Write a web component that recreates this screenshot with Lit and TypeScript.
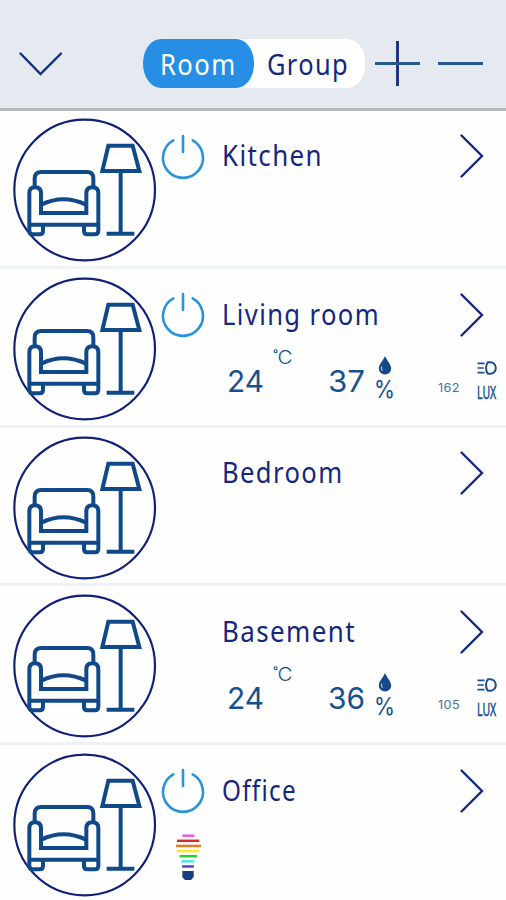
import { LitElement, html, css, svg, nothing } from "lit";
import { customElement, property } from "lit/decorators.js";

interface Room {
  name: string;
  width: number;
  power?: boolean;
  bulb?: boolean;
  climate?: { temp: string; humidity: string; lux: string };
}

const ROOMS: Room[] = [
  { name: "Kitchen", width: 101, power: true },
  { name: "Living room", width: 158, power: true, climate: { temp: "24", humidity: "37", lux: "162" } },
  { name: "Bedroom", width: 121.5 },
  { name: "Basement", width: 134, climate: { temp: "24", humidity: "36", lux: "105" } },
  { name: "Office", width: 75, power: true, bulb: true },
];

const BULB_BARS: [number, number, string][] = [
  [19, 55, "#e85be0"],
  [3, 70, "#d92b2b"],
  [0, 75, "#e57a20"],
  [3, 69, "#f5ea2c"],
  [11, 63, "#25d32b"],
  [16, 55, "#4fe6f0"],
  [18, 54, "#5546c8"],
];

/** Single-line label whose glyphs are condensed to a given width. */
const fitted = (text: string, width: number, height: number, baseline: number, cls: string) => html`
  <svg class="fit ${cls}" width=${width} height=${height}>
    <text x="0" y=${baseline} textLength=${width} lengthAdjust="spacingAndGlyphs">${text}</text>
  </svg>
`;

const fitStyles = css`
  svg { display: block; overflow: visible; flex: none; }
  .title { font: 400 29.5px "Noto Sans", "Open Sans", sans-serif; letter-spacing: 1.6px; fill: #14277c; }
`;

@customElement("room-row")
export class RoomRow extends LitElement {
  @property({ attribute: false }) room!: Room;

  static styles = [
    fitStyles,
    css`
      :host {
        display: grid;
        grid-template-columns: 162px 60px 1fr;
        height: 158.6px;
        box-sizing: border-box;
        border-bottom: 3px solid #eff2f4;
      }
      .avatar { margin: 8px 0 0 12px; }
      .side { display: flex; flex-direction: column; }
      .power { height: 72px; padding-top: 22.5px; box-sizing: border-box; }
      .bulb { margin: 17px 0 0 14px; }
      .head { display: flex; justify-content: space-between; height: 79px; padding: 23.9px 22.5px 0 0; box-sizing: border-box; }
      .metrics { display: flex; height: 60px; }
      .value { font: 400 30px Inter, sans-serif; fill: #17508f; }
      .unit { font: 300 18px Inter, sans-serif; fill: #17508f; stroke: none; }
      .lux-value { font: 400 11.5px Inter, sans-serif; letter-spacing: 0.4px; fill: #3f73a3; }
      .lux { font: 400 10.5px "Noto Sans", sans-serif; fill: #17508f; stroke: #17508f; stroke-width: 0.3; }
      .percent { font: 400 24px Inter, sans-serif; fill: #17508f; }
      .temp { margin: 20px 0 0 5px; }
      .deg { margin: 0 0 0 9px; }
      .hum { margin: 20px 0 0 35px; }
      .stack { display: flex; flex-direction: column; align-items: center; }
      .hum-unit { width: 19px; margin: 8px 0 0 10px; gap: 5px; }
      .lux-num { margin: 34px 0 0 44px; }
      .lux-unit { width: 20px; margin: 13px 0 0 16.5px; gap: 6px; }
    `,
  ];

  private climate(c: NonNullable<Room["climate"]>) {
    return html`
      <div class="metrics">
        <div class="temp">${fitted(c.temp, 37, 26, 24, "value")}</div>
        <div class="deg">
          <svg width="20" height="20">
            <circle cx="2.6" cy="3.2" r="1.5" fill="none" stroke="#17508f" stroke-width="1.1" />
            <text class="unit" x="4.6" y="16" textLength="15" lengthAdjust="spacingAndGlyphs">C</text>
          </svg>
        </div>
        <div class="hum">${fitted(c.humidity, 37, 26, 24, "value")}</div>
        <div class="stack hum-unit">
          <svg width="14" height="19" viewBox="0 0 14 19">
            <path d="M7 0C5.5 4 .8 8.5.8 12.5a6.2 6 0 0 0 12.4 0C13.2 8.5 8.5 4 7 0Z" fill="#15498a" />
            <path d="M3.8 10.5q-1 2.5 .8 4" fill="none" stroke="#a9c6df" stroke-width="1.1" />
          </svg>
          ${fitted("%", 21, 20, 18, "percent")}
        </div>
        <div class="lux-num">${fitted(c.lux, 22, 11, 9.5, "lux-value")}</div>
        <div class="stack lux-unit">
          <svg width="20" height="14" viewBox="0 0 20 14" fill="none" stroke="#17508f" stroke-width="2">
            <path d="M.5 2.3h7M.5 7h6.3M.5 11.7h7" stroke-width="1.7" />
            <path d="M11 1.2h2.2a5.6 5.8 0 0 1 0 11.6h-2.2Q9 10.5 9 7t2-5.8Z" />
          </svg>
          <svg class="lux" width="20" height="24">
            <text transform="translate(0 18) scale(1 1.65)">LUX</text>
          </svg>
        </div>
      </div>
    `;
  }

  render() {
    const r = this.room;
    return html`
      <div class="avatar">
        <svg width="145" height="145" viewBox="36 24 435 435" fill="none" stroke="#10498a" stroke-width="12">
          <circle cx="254" cy="240" r="211" stroke="#10207a" stroke-width="6.5" />
          <path d="M104 232V206Q104 186 124 186H262Q280 186 280 206V232" />
          <path d="M88 345V250Q88 232 105 232Q123 232 123 250V309H259V250Q259 232 277 232Q295 232 295 250V345" />
          <path d="M88 344H295M124 284Q190 252 258 284" />
          <path d="M88 344V362Q88 373 98 373H119Q129 373 129 363V346M252 346V363Q252 373 262 373H284Q295 373 295 362V344" />
          <path d="M325 107H398L418 183H307ZM362 185V370M320 371H403" />
        </svg>
      </div>
      <div class="side">
        <div class="power">
          ${r.power
            ? html`<svg width="42" height="46" viewBox="0 0 42 46" fill="none" stroke="#2a93dc" stroke-width="2.6" stroke-linecap="round">
                <path d="M11.3 7.4A20 20 0 1 0 30.7 7.4M21 3V19" />
              </svg>`
            : nothing}
        </div>
        ${r.bulb
          ? html`<svg class="bulb" width="25" height="46" viewBox="0 0 75 138">
              ${BULB_BARS.map(
                ([a, b, c], i) => svg`<path d="M${a} ${5 + i * 15.4}H${b}" stroke=${c} stroke-width="7.5" />`,
              )}
              <path d="M19 111H53V129L45 138H27L19 129Z" fill="#173f80" />
            </svg>`
          : nothing}
      </div>
      <div>
        <div class="head">
          ${fitted(r.name, r.width, 40, 31.5, "title")}
          <svg width="24" height="44" viewBox="0 0 24 44" fill="none" stroke="#14277c" stroke-width="2.4" stroke-linecap="round">
            <path d="M1.5 1.5L22 22L1.5 42.5" />
          </svg>
        </div>
        ${r.climate ? this.climate(r.climate) : nothing}
      </div>
    `;
  }
}

@customElement("app-root")
export class AppRoot extends LitElement {
  static styles = [
    fitStyles,
    css`
      :host { display: block; width: 506px; height: 900px; overflow: hidden; background: #fefefe; }
      header {
        display: flex;
        height: 111px;
        box-sizing: border-box;
        padding: 39px 0 0 19px;
        background: #e5e9f0;
        border-bottom: 3px solid #b6b7bb;
      }
      .down { margin-top: 12px; }
      .switch { display: flex; width: 222px; height: 49px; margin-left: 81px; border-radius: 18px / 22px; background: #fff; }
      .tab { box-sizing: border-box; padding: 5px 0 0 17px; }
      .on { width: 111px; height: 49px; border-radius: 18px / 24px; background: #268fe5; }
      .on .title { fill: #fff; }
      .off { padding-left: 13px; }
      .plus { margin: 2px 0 0 10px; }
      .minus { margin: 2px 0 0 18px; }
      .list { margin-top: -0.7px; }
    `,
  ];

  render() {
    return html`
      <header>
        <svg class="down" width="43" height="26" fill="none" stroke="#14307c" stroke-width="2.4" stroke-linecap="round">
          <path d="M1.5 2.5L21.5 23L42 2.5" />
        </svg>
        <div class="switch">
          <div class="tab on">${fitted("Room", 76.5, 40, 30.5, "title")}</div>
          <div class="tab off">${fitted("Group", 82, 40, 30.5, "title")}</div>
        </div>
        <svg class="plus" width="45" height="46" fill="none" stroke-width="2.8">
          <path d="M22.5 0V45" stroke="#14277c" /><path d="M0 22.5H45" stroke="#24588f" />
        </svg>
        <svg class="minus" width="45" height="46"><path d="M0 22.5H45" stroke="#24588f" stroke-width="2.8" /></svg>
      </header>
      <div class="list">${ROOMS.map((r) => html`<room-row .room=${r}></room-row>`)}</div>
    `;
  }
}
